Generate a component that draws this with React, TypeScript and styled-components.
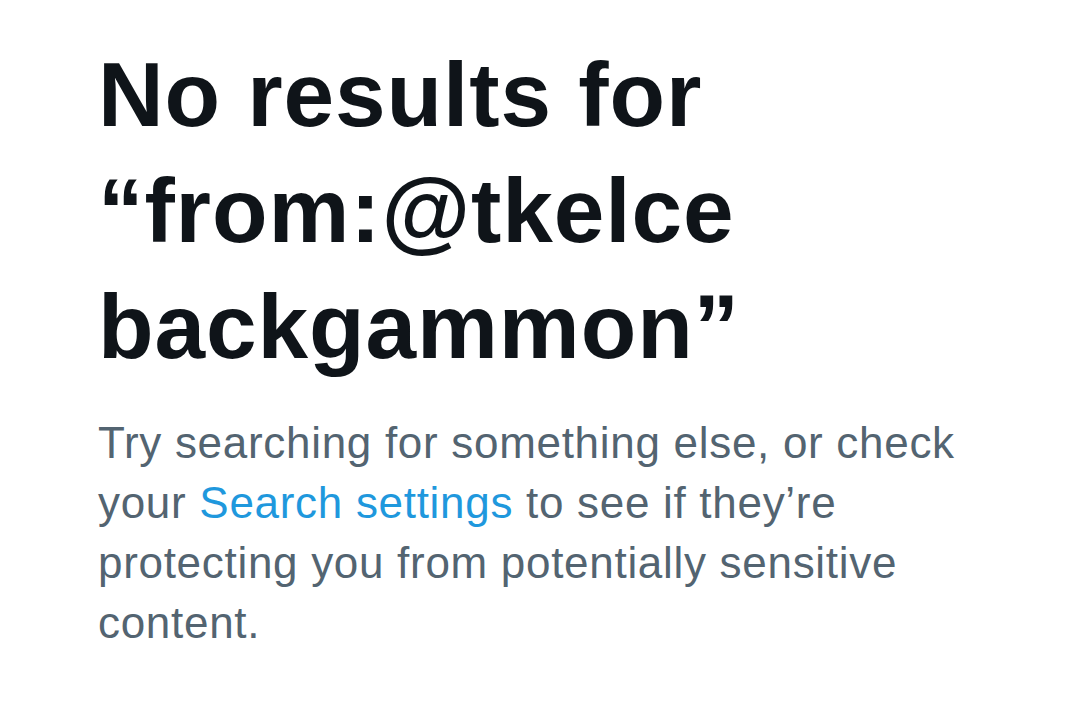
import React from "react";
import styled, { createGlobalStyle } from "styled-components";

const GlobalStyle = createGlobalStyle`
  html, body {
    margin: 0;
    padding: 0;
    background: #ffffff;
  }
`;

const EmptyState = () => {
  return (
    <>
      <GlobalStyle />
      <Wrapper>
        <Title>No results for “from:@tkelce backgammon”</Title>
        <Hint>
          Try searching for something else, or check your{" "}
          <HintLink href="#">Search settings</HintLink> to see if they’re
          protecting you from potentially sensitive content.
        </Hint>
      </Wrapper>
    </>
  );
};
export default EmptyState;

const Wrapper = styled.div`
  width: 880px;
  padding: 37px 0 0 98px;
  display: flex;
  flex-direction: column;
  font-family: "Liberation Sans", Arial, sans-serif;
`;

const Title = styled.h1`
  margin: 0;
  font-size: 91px;
  line-height: 116px;
  font-weight: 700;
  letter-spacing: 0.9px;
  color: #0f1419;
`;

const Hint = styled.p`
  margin: 28px 0 0;
  font-size: 44px;
  line-height: 60px;
  font-weight: 400;
  letter-spacing: 0.7px;
  color: #536471;
`;

const HintLink = styled.a`
  color: #1f98dd;
  text-decoration: none;
`;
